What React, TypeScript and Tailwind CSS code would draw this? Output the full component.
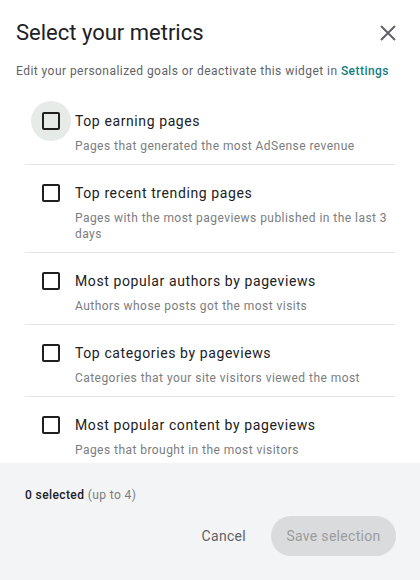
import React, { useState } from 'react';

interface Metric {
  id: string;
  title: string;
  description: string;
}

const METRICS: Metric[] = [
  { id: 'top-earning', title: 'Top earning pages', description: 'Pages that generated the most AdSense revenue' },
  { id: 'trending', title: 'Top recent trending pages', description: 'Pages with the most pageviews published in the last 3 days' },
  { id: 'authors', title: 'Most popular authors by pageviews', description: 'Authors whose posts got the most visits' },
  { id: 'categories', title: 'Top categories by pageviews', description: 'Categories that your site visitors viewed the most' },
  { id: 'content', title: 'Most popular content by pageviews', description: 'Pages that brought in the most visitors' },
];

const App: React.FC = () => {
  const [selected, setSelected] = useState<string[]>([]);

  const toggle = (id: string) => {
    setSelected((prev) => (prev.includes(id) ? prev.filter((s) => s !== id) : [...prev, id]));
  };

  return (
    <div
      className="w-[420px] h-[580px] bg-white flex flex-col overflow-hidden"
      style={{ fontFamily: 'Roboto, "Noto Sans", sans-serif' }}
    >
      {/* Header */}
      <div className="pl-4 pr-[20px] pt-[19px] flex items-center justify-between">
        <h1 className="text-[22px] leading-7 text-[#202124]">Select your metrics</h1>
        <button className="w-6 h-6 flex items-center justify-center text-[#5f6368]">
          <svg width="18" height="18" viewBox="0 0 18 18" fill="none">
            <path d="M2 2 L16 16 M16 2 L2 16" stroke="currentColor" strokeWidth="2" />
          </svg>
        </button>
      </div>
      <p className="pl-4 mt-4 text-[12px] leading-4 text-[#5f6368] tracking-[0.45px] whitespace-nowrap">
        Edit your personalized goals or deactivate this widget in{' '}
        <a className="font-medium text-[#108080]">Settings</a>
      </p>

      {/* Metric list */}
      <div className="flex-1 overflow-hidden mt-[14px] mx-[25px]">
        {METRICS.map((m, i) => {
          const checked = selected.includes(m.id);
          return (
            <div
              key={m.id}
              className={`flex gap-[15px] pl-[17px] pt-[18px] pb-[10px] ${i < METRICS.length - 1 ? 'border-b border-[#e3e6e5]' : ''}`}
            >
              <div className="relative w-[18px] h-5 flex items-center justify-center shrink-0">
                {i === 0 && (
                  <div className="absolute left-[-11px] top-[-10px] w-10 h-10 rounded-full bg-[#e6ebe8]" />
                )}
                <button
                  onClick={() => toggle(m.id)}
                  className={`relative w-[18px] h-[18px] rounded-[2px] border-2 ${checked ? 'border-[#108080] bg-[#108080]' : 'border-[#1f1f1f]'}`}
                />
              </div>
              <div className="flex flex-col">
                <span className="text-[14px] leading-5 text-[#202124] tracking-[0.6px]">{m.title}</span>
                <span className="mt-[7px] text-[12px] leading-4 text-[#7a7d80] tracking-[0.45px]">{m.description}</span>
              </div>
            </div>
          );
        })}
      </div>

      {/* Footer */}
      <div className="bg-[#f3f4f5] pt-[24px] pb-[24px] px-[25px]">
        <p className="text-[12px] leading-4 text-[#202124] tracking-[0.4px]">
          <span className="font-medium">{selected.length} selected</span>{' '}
          <span className="text-[#7a7d80]">(up to 4)</span>
        </p>
        <div className="mt-[13px] flex justify-end items-center gap-[9px] -mr-px">
          <button className="h-10 px-4 text-[14px] text-[#5f6368] rounded-full tracking-[0.3px]">Cancel</button>
          <button
            disabled={selected.length === 0}
            className="h-10 w-[125px] text-[14px] rounded-full bg-[#dadbdc] text-[#9a9c9e] tracking-[0.3px]"
          >
            Save selection
          </button>
        </div>
      </div>
    </div>
  );
};

export default App;
